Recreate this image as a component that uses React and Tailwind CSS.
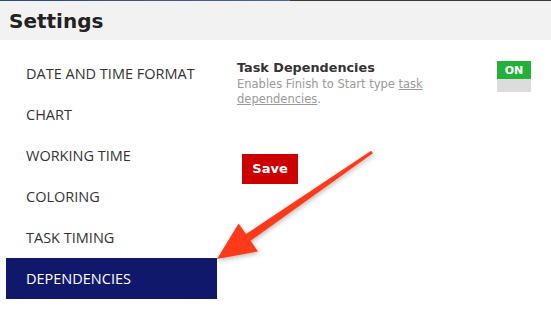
import { useState } from 'react';

const sections = ['DATE AND TIME FORMAT', 'CHART', 'WORKING TIME', 'COLORING', 'TASK TIMING', 'DEPENDENCIES'];

function Arrow() {
  return (
    <svg
      className="absolute left-0 top-0 pointer-events-none"
      width="551"
      height="309"
      style={{ filter: 'drop-shadow(1px 2px 2px rgba(0,0,0,0.25))' }}
    >
      <polygon
        points="217,259 238.6,223.4 246,234.1 371.1,150.8 372.9,153.2 250.6,240.7 258,251.4"
        fill="#ff3a1a"
        strokeLinejoin="round"
      />
    </svg>
  );
}

export default function App() {
  const [active, setActive] = useState('DEPENDENCIES');
  const [enabled, setEnabled] = useState(true);

  return (
    <div className="relative w-[551px] h-[309px] bg-white overflow-hidden font-['Open_Sans',sans-serif]">
      {/* top window edge */}
      <div className="flex h-[1px]">
        <div className="w-[290px] bg-gradient-to-r from-[#34476e] to-[#4a6694]" />
        <div className="flex-1 bg-[#3a3a3a]" />
      </div>

      {/* Header */}
      <div className="h-[39px] bg-[#f2f2f3] flex items-center px-[9px]">
        <h1 className="text-[20px] font-bold text-[#222] leading-none font-['DejaVu_Sans',sans-serif]">Settings</h1>
      </div>

      <div className="flex">
        {/* Sidebar */}
        <ul className="w-[217px] pl-[6px] pt-[13px] shrink-0">
          {sections.map((s) => (
            <li
              key={s}
              onClick={() => setActive(s)}
              className={`h-[41px] flex items-center pl-[20px] text-[14.5px] cursor-pointer ${
                active === s ? 'bg-[#0f186b] text-white' : 'text-[#333]'
              }`}
            >
              {s}
            </li>
          ))}
        </ul>

        {/* Content */}
        <div className="flex-1 pl-[20px] pt-[19px] pr-[20px] font-['DejaVu_Sans',sans-serif]">
          <div className="flex justify-between items-start">
            <div>
              <h3 className="text-[12.8px] font-bold text-[#333] leading-[18px]">Task Dependencies</h3>
              <p className="text-[11.5px] text-[#999] leading-[15px] w-[200px]">
                Enables Finish to Start type <span className="underline">task dependencies</span>.
              </p>
            </div>
            <button
              onClick={() => setEnabled(!enabled)}
              className="mt-[2px] w-[34px] flex flex-col"
            >
              <span className="h-[18px] bg-[#22b23a] text-white text-[11px] font-bold flex items-center justify-center leading-none">
                {enabled ? 'ON' : 'OFF'}
              </span>
              <span className="h-[13px] bg-[#dcdcdc]" />
            </button>
          </div>

          <button className="mt-[47px] ml-[5px] w-[56px] h-[30px] bg-[#cc0000] text-white text-[13px] font-bold">
            Save
          </button>
        </div>
      </div>

      <Arrow />
    </div>
  );
}
